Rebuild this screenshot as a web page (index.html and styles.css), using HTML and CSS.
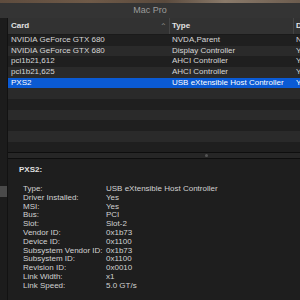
FILE: index.html
```html
<!DOCTYPE html>
<html lang="en">
<head>
    <meta charset="UTF-8">
    <meta name="viewport" content="width=device-width, initial-scale=1.0">
    <title>Mac Pro - PCI</title>
    <link rel="stylesheet" href="styles.css">
</head>
<body>
    <div class="desktop"></div>
    <div class="window">
        <div class="titlebar">Mac Pro</div>
        <div class="main">
            <div class="sidebar">
                <div class="side-sel"></div>
            </div>
            <div class="content">
                <div class="table">
                    <div class="row head">
                        <div class="cell c1">Card <span class="sort">&#x2303;</span></div>
                        <div class="cell c2">Type</div>
                        <div class="cell c3">D</div>
                    </div>
                    <div class="row">
                        <div class="cell c1">NVIDIA GeForce GTX 680</div>
                        <div class="cell c2">NVDA,Parent</div>
                        <div class="cell c3">N</div>
                    </div>
                    <div class="row">
                        <div class="cell c1">NVIDIA GeForce GTX 680</div>
                        <div class="cell c2">Display Controller</div>
                        <div class="cell c3">Y</div>
                    </div>
                    <div class="row">
                        <div class="cell c1">pci1b21,612</div>
                        <div class="cell c2">AHCI Controller</div>
                        <div class="cell c3">Y</div>
                    </div>
                    <div class="row">
                        <div class="cell c1">pci1b21,625</div>
                        <div class="cell c2">AHCI Controller</div>
                        <div class="cell c3">Y</div>
                    </div>
                    <div class="row selected">
                        <div class="cell c1">PXS2</div>
                        <div class="cell c2">USB eXtensible Host Controller</div>
                        <div class="cell c3">Y</div>
                    </div>
                    <div class="row"></div>
                    <div class="row"></div>
                    <div class="row"></div>
                    <div class="row"></div>
                    <div class="row"></div>
                    <div class="row"></div>
                </div>
                <div class="splitter"><span class="grip"></span></div>
                <div class="detail">
                    <div class="detail-title">PXS2:</div>
                    <dl class="props">
                        <dt>Type:</dt><dd>USB eXtensible Host Controller</dd>
                        <dt>Driver Installed:</dt><dd>Yes</dd>
                        <dt>MSI:</dt><dd>Yes</dd>
                        <dt>Bus:</dt><dd>PCI</dd>
                        <dt>Slot:</dt><dd>Slot-2</dd>
                        <dt>Vendor ID:</dt><dd>0x1b73</dd>
                        <dt>Device ID:</dt><dd>0x1100</dd>
                        <dt>Subsystem Vendor ID:</dt><dd>0x1b73</dd>
                        <dt>Subsystem ID:</dt><dd>0x1100</dd>
                        <dt>Revision ID:</dt><dd>0x0010</dd>
                        <dt>Link Width:</dt><dd>x1</dd>
                        <dt>Link Speed:</dt><dd>5.0 GT/s</dd>
                    </dl>
                </div>
            </div>
        </div>
    </div>
</body>
</html>
```

FILE: styles.css
```css
body {
    margin: 0;
    width: 300px;
    height: 300px;
    overflow: hidden;
    background-color: #1e1e1e;
    font-family: "Liberation Sans", Arial, sans-serif;
    font-size: 8px;
    color: #d6d6d6;
}
.desktop {
    height: 3px;
    background: linear-gradient(90deg, #5e4c3e 0%, #6f5a48 30%, #5a4a3d 55%, #8a7a6a 75%, #6c5c4e 100%);
}
.window {
    width: 404px;
}
.titlebar {
    height: 15px;
    line-height: 15px;
    width: 300px;
    text-align: center;
    font-size: 9px;
    color: #9c9c9c;
    background-color: #343434;
}
.main {
    display: flex;
    height: 282px;
    background-color: #343434;
}
.sidebar {
    width: 7px;
    border-right: 1px solid #121212;
    background-color: #1c1c1c;
    padding-top: 168px;
}
.side-sel {
    height: 11px;
    background-color: #4a4a4a;
}
.content {
    flex: 1;
    display: flex;
    flex-direction: column;
}
.table {
    height: 134px;
    overflow: hidden;
    background-color: #1f1f1f;
}
.row {
    display: flex;
    height: 10.67px;
    line-height: 10.67px;
}
.row:nth-child(odd) {
    background-color: #2a2a2a;
}
.row.head {
    height: 16px;
    line-height: 16px;
    background-color: #323232;
    border-bottom: 1px solid #1a1a1a;
    font-weight: bold;
    color: #e2e2e2;
}
.row.selected {
    background-color: #0a5ad4;
    color: #ffffff;
}
.cell {
    white-space: nowrap;
    overflow: hidden;
    box-sizing: border-box;
    padding-left: 3px;
}
.c1 {
    width: 161px;
    position: relative;
}
.c2 {
    width: 124px;
}
.c3 {
    flex: 1;
}
.head .c2,
.head .c3 {
    border-left: 1px solid #444;
    padding-left: 2px;
}
.sort {
    position: absolute;
    right: 2px;
    top: 1px;
    font-weight: normal;
    color: #8a8a8a;
    font-size: 8px;
}
.splitter {
    height: 5px;
    border-top: 1px solid #0e0e0e;
    border-bottom: 1px solid #0e0e0e;
    background-color: #262626;
    display: flex;
    justify-content: center;
    align-items: center;
}
.grip {
    width: 3px;
    height: 3px;
    border-radius: 50%;
    background-color: #555;
}
.detail {
    flex: 1;
    background-color: #1e1e1e;
    padding: 6px 0 0 11px;
}
.detail-title {
    font-weight: bold;
    line-height: 10px;
    color: #e0e0e0;
}
.props {
    display: grid;
    grid-template-columns: 83px auto;
    margin: 10px 0 0 4px;
    line-height: 8.8px;
    color: #d2d2d2;
}
.props dt,
.props dd {
    margin: 0;
    white-space: nowrap;
}
```
